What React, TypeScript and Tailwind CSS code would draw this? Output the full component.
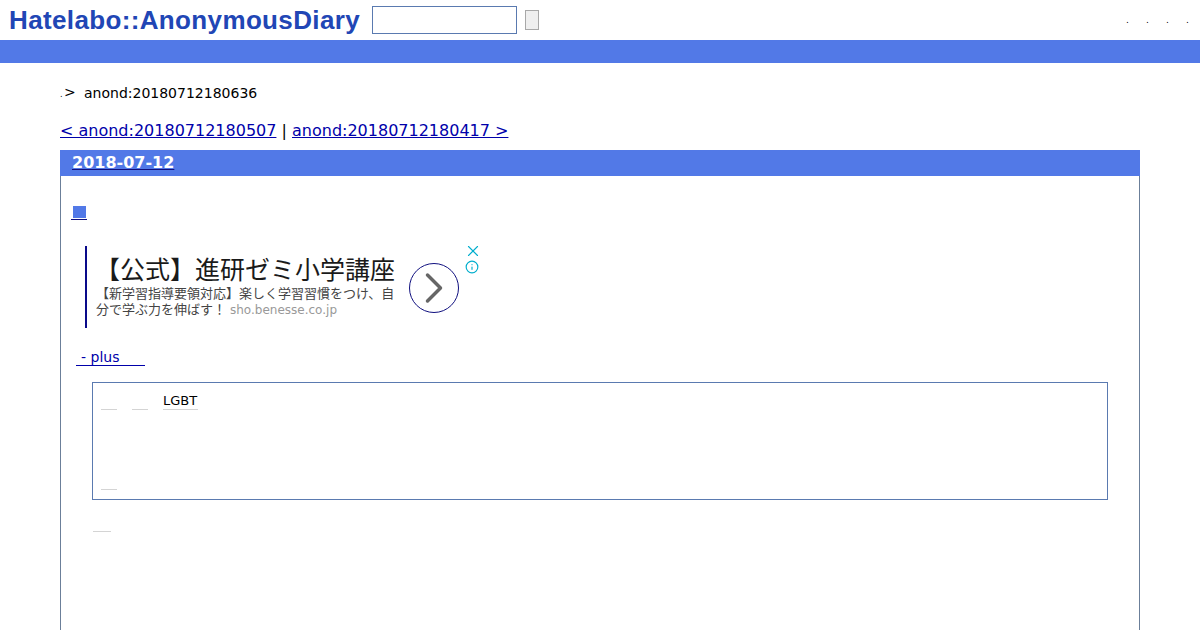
import { X, Info, ChevronRight } from "lucide-react";

const sans = "font-['DejaVu_Sans','Noto_Sans_CJK_JP',sans-serif]";

function Blank({ className }: { className: string }) {
  return <span className={`block h-px bg-[#d4d4d4] ${className}`} />;
}

function Header() {
  return (
    <header className="flex h-10 items-center pl-[9px] pr-2">
      <div className="w-[363px] font-['Liberation_Sans',sans-serif] text-[26px] leading-10 font-bold tracking-[0.36px] whitespace-nowrap text-[#2146b5]">
        Hatelabo::AnonymousDiary
      </div>
      <input className="h-7 w-[145px] border border-[#5a7ab0] bg-white" />
      <button className="ml-2 h-5 w-[14px] border border-[#a8a8a8] bg-[#efefef]" />
      <div className="ml-auto flex gap-[19px] pr-[5px] text-[9px] leading-none text-black">
        <span className="w-px">.</span>
        <span className="w-px">.</span>
        <span className="w-px">.</span>
        <span className="w-px">.</span>
      </div>
    </header>
  );
}

function Ad() {
  return (
    <div className="mt-[26px] ml-[14px] flex h-[82px] w-[400px] border-l-2 border-[#0a0a8a]">
      <div className="w-[318px] shrink-0 pl-[9px]">
        <div className="mt-[10px] -ml-px text-[25px] leading-[30px] whitespace-nowrap text-[#1a1a1a]">【公式】進研ゼミ小学講座</div>
        <p className="w-[300px] text-[13px] leading-[16px] text-[#444444]">
          【新学習指導要領対応】楽しく学習習慣をつけ、自分で学ぶ力を伸ばす！
          <span className="ml-1 text-[12px] text-[#999999]">sho.benesse.co.jp</span>
        </p>
      </div>
      <div className="relative mt-[17px] ml-[4px] flex h-[50px] w-[50px] shrink-0 items-center justify-center rounded-full border border-[#10107f]">
        <ChevronRight size={52} strokeWidth={1.6} className="shrink-0 text-[#666666]" />
        <X size={18} strokeWidth={1.5} className="absolute -top-[22px] left-[54px] text-[#00aecd]" />
        <Info size={14} strokeWidth={2} className="absolute -top-[4px] left-[55px] text-[#00aecd]" />
      </div>
    </div>
  );
}

function Entry() {
  return (
    <section className="mt-[9px] h-[480px] border-x border-[#6b7f99]">
      <h2 className="-mx-px h-[26px] bg-[#5279e7] pl-3 text-[16px] leading-[26px] font-bold text-white">
        <a className="underline decoration-[#10107f]" href="#">2018-07-12</a>
      </h2>
      <div className="pt-[26px] pl-[10px]">
        <a className="block w-[16px] border-b border-[#10107f] pt-[4px] pb-[1px] pl-[2px]" href="#">
          <span className="block h-[12px] w-[13px] bg-[#5279e7]" />
        </a>
        <Ad />
        <a className="mt-[21px] ml-[5px] block w-[69px] border-b border-[#0000aa] pl-[5px] text-[14px] leading-[16px] text-[#0000aa]" href="#">
          - plus
        </a>
        <blockquote className="mt-[16px] mr-[31px] ml-[21px] h-[118px] border border-[#5a7ab0] px-[8px]">
          <div className="flex gap-[15px] pt-[10px]">
            <div className="pt-[16px]"><Blank className="w-[16px]" /></div>
            <div className="pt-[16px]"><Blank className="w-[16px]" /></div>
            <div className="w-[35px]">
              <div className="text-[13px] leading-[16px] text-black">LGBT</div>
              <Blank className="w-[35px]" />
            </div>
          </div>
          <Blank className="mt-[79px] w-[16px]" />
        </blockquote>
        <Blank className="mt-[31px] ml-[22px] w-[18px]" />
      </div>
    </section>
  );
}

export default function App() {
  return (
    <div className={`h-[630px] w-[1200px] overflow-hidden bg-white ${sans}`}>
      <Header />
      <div className="h-[23px] bg-[#5279e7]" />
      <main className="px-[60px]">
        <div className="mt-[21px] flex h-[18px] items-center text-[14px] leading-[18px] text-black">
          <span className="mt-[4px] w-[4px] text-[8px]">.</span>
          <span className="-mt-[2px] w-[20px]">&gt;</span>
          <span>anond:20180712180636</span>
        </div>
        <nav className="mt-[19px] text-[16px] leading-[20px] text-black">
          <a className="text-[#0000aa] underline" href="#">&lt; anond:20180712180507</a>
          {" | "}
          <a className="text-[#0000aa] underline" href="#">anond:20180712180417 &gt;</a>
        </nav>
        <Entry />
      </main>
    </div>
  );
}
